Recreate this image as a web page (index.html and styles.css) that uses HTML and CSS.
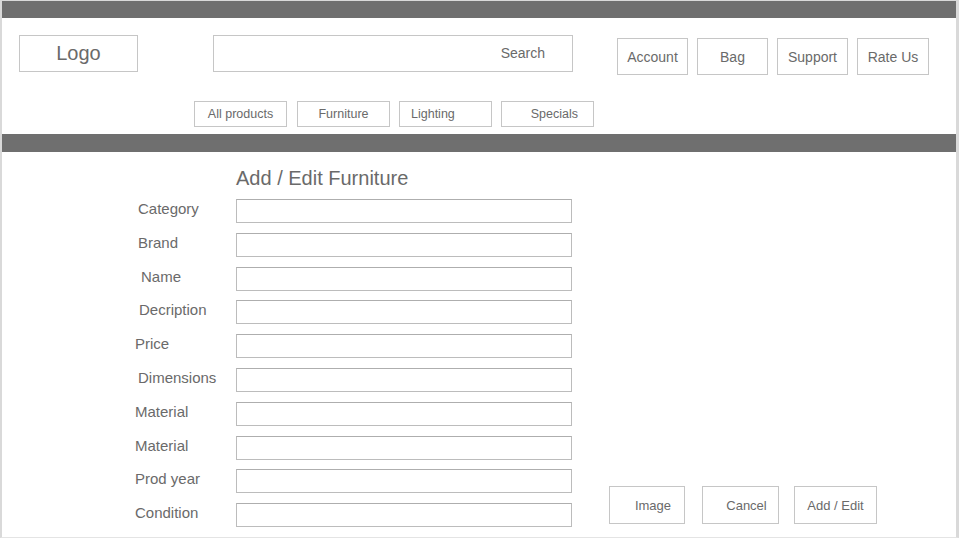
FILE: index.html
```html
<!DOCTYPE html>
<html lang="en">
<head>
<meta charset="utf-8">
<title>Add / Edit Furniture</title>
<link rel="stylesheet" href="styles.css">
</head>
<body>
<div class="frame">
  <div class="bar bar-top"></div>
  <header class="header">
    <div class="header-row">
      <div class="logo">Logo</div>
      <div class="search">Search</div>
      <nav class="user-menu">
        <div class="box-btn">Account</div>
        <div class="box-btn">Bag</div>
        <div class="box-btn">Support</div>
        <div class="box-btn wide">Rate Us</div>
      </nav>
    </div>
    <nav class="cat-nav">
      <div class="cat first">All products</div>
      <div class="cat">Furniture</div>
      <div class="cat align-left">Lighting</div>
      <div class="cat align-right">Specials</div>
    </nav>
  </header>
  <div class="bar bar-mid"></div>
  <main class="content">
    <section class="form">
      <h1 class="form-title">Add / Edit Furniture</h1>
      <div class="fields">
        <label class="lbl in3">Category</label><input class="field" type="text">
        <label class="lbl in3">Brand</label><input class="field" type="text">
        <label class="lbl in6">Name</label><input class="field" type="text">
        <label class="lbl in4">Decription</label><input class="field" type="text">
        <label class="lbl">Price</label><input class="field" type="text">
        <label class="lbl in3">Dimensions</label><input class="field" type="text">
        <label class="lbl">Material</label><input class="field" type="text">
        <label class="lbl">Material</label><input class="field" type="text">
        <label class="lbl">Prod year</label><input class="field" type="text">
        <label class="lbl">Condition</label><input class="field" type="text">
      </div>
    </section>
    <div class="actions">
      <div class="act shift">Image</div>
      <div class="act shift">Cancel</div>
      <div class="act wide">Add / Edit</div>
    </div>
  </main>
</div>
</body>
</html>
```

FILE: styles.css
```css
html, body {
  margin: 0;
  padding: 0;
  background: #ffffff;
}

body {
  font-family: "Liberation Sans", Arial, Helvetica, sans-serif;
  color: #6a6a6a;
}

.frame {
  box-sizing: border-box;
  width: 959px;
  height: 538px;
  border-top: 1px solid #d9d9d9;
  border-left: 2px solid #d9d9d9;
  border-right: 3px solid #d9d9d9;
  border-bottom: 1px solid #e4e4e4;
  overflow: hidden;
  display: flex;
  flex-direction: column;
}

.bar {
  background: #6f6f6f;
  flex: none;
}

.bar-top {
  height: 17px;
}

.bar-mid {
  height: 18px;
}

.header {
  height: 116px;
  box-sizing: border-box;
  padding-top: 17px;
  flex: none;
}

.header-row {
  display: flex;
  align-items: flex-start;
  padding-left: 17px;
}

.logo {
  box-sizing: border-box;
  width: 119px;
  height: 37px;
  border: 1px solid #c6c6c6;
  display: flex;
  align-items: center;
  justify-content: center;
  font-size: 20px;
}

.search {
  box-sizing: border-box;
  margin-left: 75px;
  width: 360px;
  height: 37px;
  border: 1px solid #c6c6c6;
  display: flex;
  align-items: center;
  justify-content: flex-end;
  padding-right: 27px;
  padding-bottom: 2px;
  font-size: 14px;
}

.user-menu {
  display: flex;
  gap: 9px;
  margin-left: 44px;
  margin-top: 3px;
}

.box-btn {
  box-sizing: border-box;
  width: 71px;
  height: 37px;
  border: 1px solid #c6c6c6;
  display: flex;
  align-items: center;
  justify-content: center;
  font-size: 14px;
}

.box-btn.wide {
  width: 72px;
}

.cat-nav {
  display: flex;
  gap: 9px;
  margin-top: 26px;
  padding-left: 192px;
}

.cat {
  box-sizing: border-box;
  width: 93px;
  height: 26px;
  border: 1px solid #c6c6c6;
  display: flex;
  align-items: center;
  justify-content: center;
  font-size: 12.5px;
}

.cat.first {
  margin-right: 1px;
}

.cat.align-left {
  justify-content: flex-start;
  padding-left: 11px;
}

.cat.align-right {
  justify-content: flex-end;
  padding-right: 15px;
}

.content {
  flex: none;
  display: flex;
  align-items: flex-end;
  align-self: flex-start;
  padding-top: 14px;
  padding-left: 133px;
}

.form-title {
  margin: 0 0 9px 101px;
  font-size: 20px;
  font-weight: normal;
  line-height: 24px;
  color: #6a6a6a;
}

.fields {
  display: grid;
  grid-template-columns: 101px 336px;
  row-gap: 9.8px;
}

.lbl {
  font-size: 15px;
  line-height: 19px;
  align-self: start;
  color: #6a6a6a;
}

.lbl.in3 {
  padding-left: 3px;
}

.lbl.in4 {
  padding-left: 4px;
}

.lbl.in6 {
  padding-left: 6px;
}

.field {
  box-sizing: border-box;
  width: 336px;
  height: 24px;
  margin: 0;
  padding: 0;
  border: 1px solid #bcbcbc;
  border-top-color: #aeaeae;
  background: #ffffff;
  outline: none;
}

.actions {
  display: flex;
  margin-left: 37px;
  margin-bottom: 3px;
}

.act {
  box-sizing: border-box;
  width: 76px;
  height: 38px;
  border: 1px solid #c6c6c6;
  display: flex;
  align-items: center;
  justify-content: center;
  font-size: 13px;
  margin-right: 17px;
}

.act.shift {
  padding-left: 12px;
}

.act.shift + .act.shift {
  width: 77px;
  margin-right: 15px;
}

.act.wide {
  width: 83px;
  margin-right: 0;
}
```
